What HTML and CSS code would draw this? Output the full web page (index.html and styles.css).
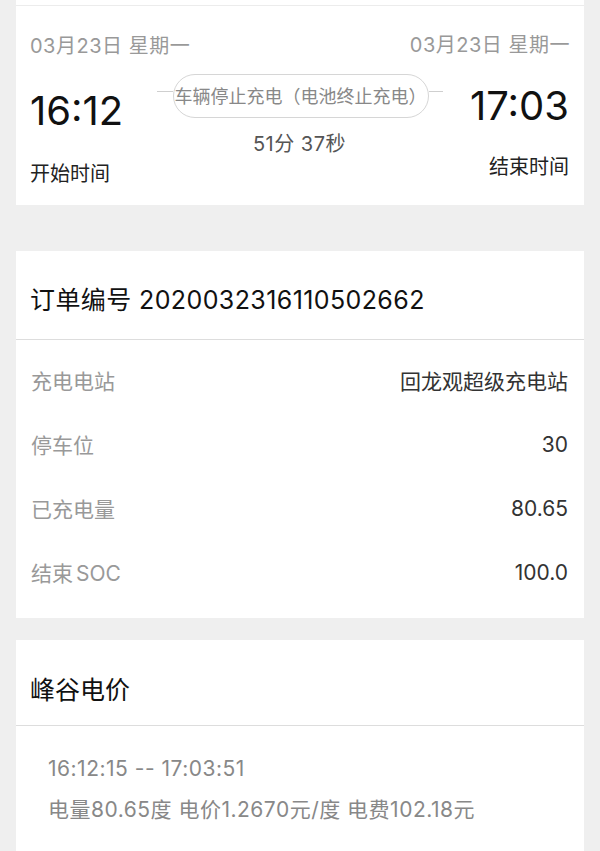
FILE: index.html
```html
<!DOCTYPE html>
<html lang="zh-CN">
<head>
  <meta charset="UTF-8" />
  <meta name="viewport" content="width=device-width, initial-scale=1.0" />
  <title>充电订单详情</title>
  <link rel="stylesheet" href="styles.css">
</head>
<body>
  <section class="card time-card">
    <div class="card-top"></div>
    <div class="time-body">
      <div class="time-col start">
        <span class="date">03月23日 星期一</span>
        <span class="clock">16:12</span>
        <span class="clock-label">开始时间</span>
      </div>

      <div class="time-mid">
        <div class="status">
          <span class="status-line left"></span>
          <span class="status-pill">车辆停止充电（电池终止充电）</span>
          <span class="status-line right"></span>
        </div>
        <span class="duration">51分 37秒</span>
      </div>

      <div class="time-col end">
        <span class="date">03月23日 星期一</span>
        <span class="clock">17:03</span>
        <span class="clock-label">结束时间</span>
      </div>
    </div>
  </section>

  <section class="card order-card">
    <h2 class="card-title order-title">订单编号 2020032316110502662</h2>
    <ul class="info-list">
      <li class="info-row"><span class="info-label">充电电站</span><span class="info-value">回龙观超级充电站</span></li>
      <li class="info-row"><span class="info-label">停车位</span><span class="info-value">30</span></li>
      <li class="info-row"><span class="info-label">已充电量</span><span class="info-value">80.65</span></li>
      <li class="info-row"><span class="info-label">结束<span class="latin">SOC</span></span><span class="info-value">100.0</span></li>
    </ul>
  </section>

  <section class="card price-card">
    <h2 class="card-title price-title">峰谷电价</h2>
    <div class="price-body">
      <p class="price-range">16:12:15 -- 17:03:51</p>
      <p class="price-detail">电量80.65度 电价1.2670元/度 电费102.18元</p>
    </div>
  </section>
</body>
</html>
```

FILE: styles.css
```css
:root {
  --page-bg: #efefef;
  --card-bg: #ffffff;
  --line-color: #dddddd;
  --text-dark: #111;
  --text-gray: #999;
}

* {
  box-sizing: border-box;
}

body {
  margin: 0;
  padding: 0;
  background: var(--page-bg);
  font-family: Inter, "Noto Sans CJK SC", sans-serif;
  color: var(--text-dark);
}

.card {
  margin: 0 16px;
  background: var(--card-bg);
}

/* top card: start / end time */
.card-top {
  height: 6px;
  border-bottom: 1px solid #ececec;
}

.time-body {
  display: grid;
  grid-template-columns: minmax(0, 1fr) auto minmax(0, 1fr);
  height: 199px;
  padding: 28px 15px 0 14px;
}

.time-col {
  display: flex;
  flex-direction: column;
  min-width: 0;
  white-space: nowrap;
}

.time-col.start {
  align-items: flex-start;
}

.time-col.end {
  align-items: flex-end;
}

.date {
  font-size: 20px;
  line-height: 24px;
  letter-spacing: 0.5px;
  color: var(--text-gray);
}

.end .date {
  margin-top: -1px;
  margin-right: -1px;
}

.clock {
  font-size: 40px;
  line-height: 40px;
  color: var(--text-dark);
}

.start .clock {
  margin-top: 33px;
}

.end .clock {
  margin-top: 29px;
}

.clock-label {
  font-size: 20px;
  line-height: 24px;
  color: #222;
}

.start .clock-label {
  margin-top: 31px;
}

.end .clock-label {
  margin-top: 29px;
}

.time-mid {
  display: flex;
  flex-direction: column;
  align-items: center;
  padding-top: 40px;
}

.status {
  display: flex;
  align-items: center;
}

.status-line {
  height: 1px;
  background: #cfcfcf;
  margin-bottom: 9px;
}

.status-line.left {
  width: 16px;
}

.status-line.right {
  width: 14px;
}

.status-pill {
  height: 44px;
  padding: 2px 1px 0;
  border: 1px solid #d6d6d6;
  border-radius: 22px;
  font-size: 18px;
  line-height: 40px;
  color: #888;
  white-space: nowrap;
}

.duration {
  margin-top: 13px;
  font-size: 20px;
  line-height: 26px;
  letter-spacing: 0.5px;
  color: #555;
}

/* order card */
.order-card {
  margin-top: 46px;
}

.card-title {
  margin: 0;
  padding: 34px 14px 22px;
  border-bottom: 1px solid var(--line-color);
  font-size: 25px;
  line-height: 32px;
  font-weight: normal;
  color: var(--text-dark);
}

.order-title {
  padding-top: 33px;
  padding-bottom: 23px;
  letter-spacing: 0.4px;
}

.info-list {
  list-style: none;
  margin: 0;
  padding: 8px 16px 14px 15px;
}

.info-row {
  display: flex;
  justify-content: space-between;
  align-items: center;
  height: 64px;
  font-size: 21px;
}

.info-label {
  color: var(--text-gray);
}

.latin {
  margin-left: 3px;
}

.info-value {
  color: #333;
}

/* price card */
.price-card {
  margin-top: 22px;
  padding-bottom: 40px;
}

.price-title {
  padding: 34px 14px 19px;
}

.price-body {
  padding: 31px 32px 0;
  color: #888;
  font-size: 21px;
  line-height: 24px;
  letter-spacing: 0.5px;
}

.price-body p {
  margin: 0;
}

.price-detail {
  margin-top: 17px !important;
}
```
